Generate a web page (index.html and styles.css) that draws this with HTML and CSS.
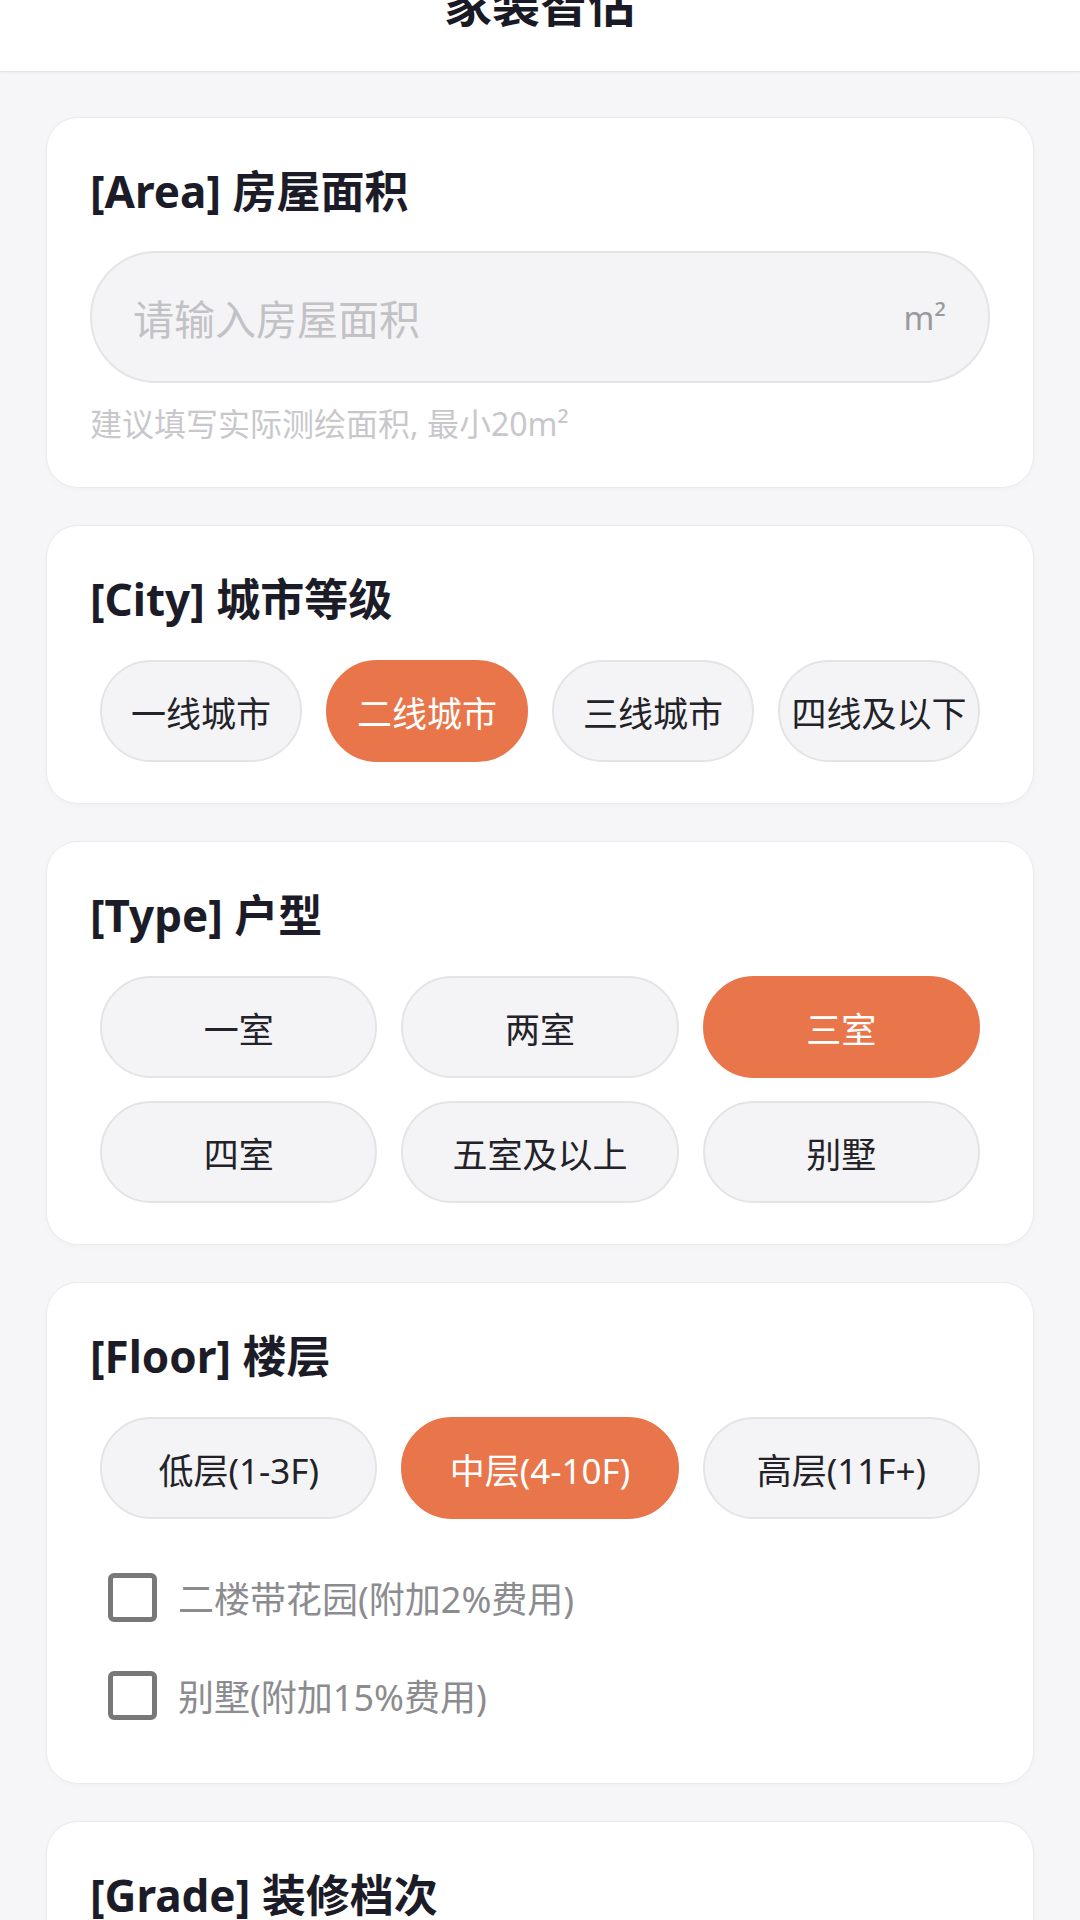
FILE: index.html
```html
<!DOCTYPE html>
<html lang="zh-CN">
<head>
<meta charset="utf-8">
<title>家装智估</title>
<link rel="stylesheet" href="styles.css">
</head>
<body>
<header class="topbar">
  <h1 class="topbar-title">家装智估</h1>
</header>
<main class="page">
  <section class="card">
    <h2 class="card-title">[Area] 房屋面积</h2>
    <div class="field">
      <span class="field-placeholder">请输入房屋面积</span>
      <span class="field-unit">m²</span>
    </div>
    <p class="hint">建议填写实际测绘面积, 最小20m²</p>
  </section>

  <section class="card">
    <h2 class="card-title">[City] 城市等级</h2>
    <div class="chips chips-4">
      <div class="chip">一线城市</div>
      <div class="chip is-active">二线城市</div>
      <div class="chip">三线城市</div>
      <div class="chip">四线及以下</div>
    </div>
  </section>

  <section class="card">
    <h2 class="card-title">[Type] 户型</h2>
    <div class="chips chips-3">
      <div class="chip">一室</div>
      <div class="chip">两室</div>
      <div class="chip is-active">三室</div>
      <div class="chip">四室</div>
      <div class="chip">五室及以上</div>
      <div class="chip">别墅</div>
    </div>
  </section>

  <section class="card card-floor">
    <h2 class="card-title">[Floor] 楼层</h2>
    <div class="chips chips-3">
      <div class="chip">低层(1-3F)</div>
      <div class="chip is-active">中层(4-10F)</div>
      <div class="chip">高层(11F+)</div>
    </div>
    <div class="checks">
      <label class="check"><span class="check-box"></span><span class="check-label">二楼带花园(附加2%费用)</span></label>
      <label class="check"><span class="check-box"></span><span class="check-label">别墅(附加15%费用)</span></label>
    </div>
  </section>

  <section class="card card-last">
    <h2 class="card-title">[Grade] 装修档次</h2>
  </section>
</main>
</body>
</html>
```

FILE: styles.css
```css
* { box-sizing: border-box; }

html, body {
  margin: 0;
  padding: 0;
}

body {
  background: #f6f6f8;
  font-family: "Noto Sans", "Noto Sans CJK SC", sans-serif;
  color: #1c1c28;
  overflow: hidden;
}

.topbar {
  display: flex;
  justify-content: center;
  align-items: flex-start;
  height: 72px;
  background: #ffffff;
  border-bottom: 1px solid #e4e4e6;
  box-shadow: 0 1px 3px rgba(0, 0, 0, 0.04);
}

.topbar-title {
  margin: -23px 0 0;
  font-size: 48px;
  line-height: 48px;
  font-weight: 700;
  color: #1a1a26;
  font-family: "Noto Sans CJK SC", sans-serif;
}

.page {
  display: flex;
  flex-direction: column;
  gap: 37px;
  padding: 45px 46px 0;
}

.card {
  background: #ffffff;
  border: 1px solid #ebebed;
  border-radius: 32px;
  padding: 43px 43px 41px;
  box-shadow: 0 2px 6px rgba(0, 0, 0, 0.025);
}

.card-title {
  margin: 0 0 31px;
  font-size: 44px;
  line-height: 60px;
  font-weight: 700;
  color: #1c1c28;
}

.field {
  display: flex;
  align-items: center;
  justify-content: space-between;
  height: 132px;
  margin-top: -1px;
  padding: 0 42px 0 41px;
  background: #f4f4f6;
  border: 2px solid #e5e5e8;
  border-radius: 66px;
}

.field-placeholder {
  font-size: 41px;
  color: #c2c2c6;
  font-family: "Noto Sans CJK SC", sans-serif;
}

.field-unit {
  font-size: 33px;
  color: #9a9a9e;
}

.hint {
  margin: 19px 0 0;
  font-size: 32px;
  line-height: 44px;
  color: #c8c8cc;
}

.chips {
  display: grid;
  gap: 23px 24px;
  padding: 0 10px;
}

.chips-4 { grid-template-columns: repeat(4, 1fr); }
.chips-3 { grid-template-columns: repeat(3, 1fr); }

.chip {
  display: flex;
  align-items: center;
  justify-content: center;
  height: 102px;
  background: #f4f4f6;
  border: 2px solid #e4e4e7;
  border-radius: 51px;
  font-size: 35px;
  color: #222228;
  white-space: nowrap;
}

.chip.is-active {
  background: #e8764a;
  border-color: #e8764a;
  color: #ffffff;
}

.checks {
  display: flex;
  flex-direction: column;
  margin-top: 29px;
  margin-bottom: -2px;
}

.check {
  display: flex;
  align-items: center;
  gap: 21px;
  height: 98px;
  padding-left: 18px;
}

.check-box {
  width: 49px;
  height: 49px;
  border: 5px solid #787878;
  border-radius: 6px;
  background: #ffffff;
  flex: none;
}

.check-label {
  font-size: 36px;
  color: #8c8c90;
}

.card-last {
  min-height: 260px;
}
```
